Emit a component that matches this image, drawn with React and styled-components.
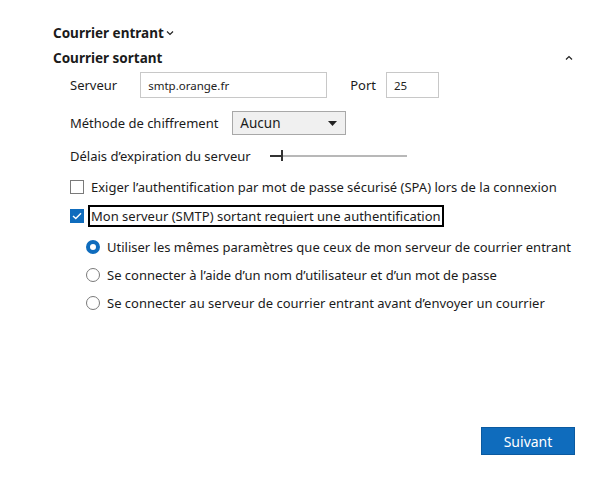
import styled, { createGlobalStyle } from "styled-components";

const Global = createGlobalStyle`
  body {
    margin: 0;
    background: #fff;
    font-family: "Noto Sans", "Open Sans", sans-serif;
    color: #1b1b1b;
  }
`;

const Page = styled.div`
  width: 605px;
  height: 486px;
  box-sizing: border-box;
  padding: 23px 30px 0 53px;
  display: flex;
  flex-direction: column;
  white-space: nowrap;
`;

const SectionHead = styled.div`
  display: flex;
  align-items: center;
  justify-content: ${(p) => (p.$spread ? "space-between" : "flex-start")};
  font-size: 13.5px;
  font-weight: 700;
  height: 20px;
  margin-bottom: ${(p) => p.$gap || 0}px;
`;

const Chevron = styled.svg`
  width: 8px;
  height: 6px;
  margin-left: 2px;
  margin-right: ${(p) => p.$right || 0}px;
`;

const Body = styled.div`
  padding-left: 17px;
  display: flex;
  flex-direction: column;
`;

const Row = styled.div`
  display: flex;
  align-items: center;
  font-size: 13px;
  height: ${(p) => p.$h}px;
  margin-bottom: ${(p) => p.$mb || 0}px;
`;

const Label = styled.span`
  margin-left: ${(p) => p.$ml || 0}px;
  margin-right: ${(p) => p.$mr}px;
`;

const TextBox = styled.div`
  box-sizing: border-box;
  width: ${(p) => p.$w}px;
  height: 26px;
  border: 1px solid #c8c8c8;
  padding: 0 7px;
  display: flex;
  align-items: center;
  font-size: 11.5px;
  color: #222;
`;

const Select = styled.div`
  box-sizing: border-box;
  width: 114px;
  height: 24px;
  border: 1px solid #a8a8a8;
  background: #f0f0f0;
  padding: 0 8px 0 7px;
  display: flex;
  align-items: center;
  justify-content: space-between;
  font-size: 13.5px;
`;

const Slider = styled.div`
  position: relative;
  width: 137px;
  height: 2px;
  background: #b8b8b8;
`;

const SliderFill = styled.div`
  position: absolute;
  left: 0;
  top: 0;
  width: 12px;
  height: 2px;
  background: #333;
`;

const Thumb = styled.div`
  position: absolute;
  left: 11px;
  top: -5px;
  width: 2px;
  height: 11px;
  background: #333;
`;

const Check = styled.div`
  box-sizing: border-box;
  width: 14px;
  height: 14px;
  border: 1px solid ${(p) => (p.$on ? "#0f6cbd" : "#7a7a7a")};
  background: ${(p) => (p.$on ? "#0f6cbd" : "#fff")};
  display: flex;
  align-items: center;
  justify-content: center;
  margin-right: ${(p) => p.$mr}px;
`;

const Focused = styled.span`
  border: 2px solid #000;
  padding: 0 1px;
  line-height: 18px;
`;

const Radios = styled.div`
  padding-left: 16px;
  display: flex;
  flex-direction: column;
`;

const Radio = styled.div`
  box-sizing: border-box;
  width: 14px;
  height: 14px;
  border-radius: 50%;
  border: ${(p) => (p.$on ? "4px solid #0f6cbd" : "1px solid #7a7a7a")};
  margin-right: 7px;
`;

const Footer = styled.div`
  margin-top: auto;
  display: flex;
  justify-content: flex-end;
  padding-bottom: 31px;
`;

const Button = styled.button`
  width: 94px;
  height: 28px;
  background: #0f6cbd;
  border: 1px solid #0b5aa0;
  color: #fff;
  font-family: inherit;
  font-size: 14px;
  padding: 0;
`;

export default function App() {
  return (
    <>
      <Global />
      <Page>
        <SectionHead $gap={5}>
          Courrier entrant
          <Chevron viewBox="0 0 8 6">
            <path d="M1 1.5 L4 4.5 L7 1.5" fill="none" stroke="#222" strokeWidth="1.2" />
          </Chevron>
        </SectionHead>
        <SectionHead $spread $gap={3}>
          Courrier sortant
          <Chevron viewBox="0 0 8 6" $right={2}>
            <path d="M1 4.5 L4 1.5 L7 4.5" fill="none" stroke="#222" strokeWidth="1.2" />
          </Chevron>
        </SectionHead>
        <Body>
          <Row $h={28} $mb={12}>
            <Label $mr={23}>Serveur</Label>
            <TextBox $w={187}>smtp.orange.fr</TextBox>
            <Label $ml={23} $mr={10}>Port</Label>
            <TextBox $w={53}>25</TextBox>
          </Row>
          <Row $h={24} $mb={10}>
            <Label $mr={14}>Méthode de chiffrement</Label>
            <Select>
              Aucun
              <svg width="9" height="5" viewBox="0 0 9 5">
                <path d="M0 0 H9 L4.5 5 Z" fill="#222" />
              </svg>
            </Select>
          </Row>
          <Row $h={22} $mb={9}>
            <Label $mr={19}>Délais d’expiration du serveur</Label>
            <Slider>
              <SliderFill />
              <Thumb />
            </Slider>
          </Row>
          <Row $h={22} $mb={7}>
            <Check $mr={7} />
            Exiger l’authentification par mot de passe sécurisé (SPA) lors de la connexion
          </Row>
          <Row $h={22} $mb={6}>
            <Check $on $mr={4}>
              <svg width="10" height="8" viewBox="0 0 10 8">
                <path d="M1 4 L3.8 6.6 L9 1.2" fill="none" stroke="#fff" strokeWidth="1.4" />
              </svg>
            </Check>
            <Focused>Mon serveur (SMTP) sortant requiert une authentification</Focused>
          </Row>
          <Radios>
            <Row $h={28}>
              <Radio $on />
              Utiliser les mêmes paramètres que ceux de mon serveur de courrier entrant
            </Row>
            <Row $h={28}>
              <Radio />
              Se connecter à l’aide d’un nom d’utilisateur et d’un mot de passe
            </Row>
            <Row $h={28}>
              <Radio />
              Se connecter au serveur de courrier entrant avant d’envoyer un courrier
            </Row>
          </Radios>
        </Body>
        <Footer>
          <Button>Suivant</Button>
        </Footer>
      </Page>
    </>
  );
}
